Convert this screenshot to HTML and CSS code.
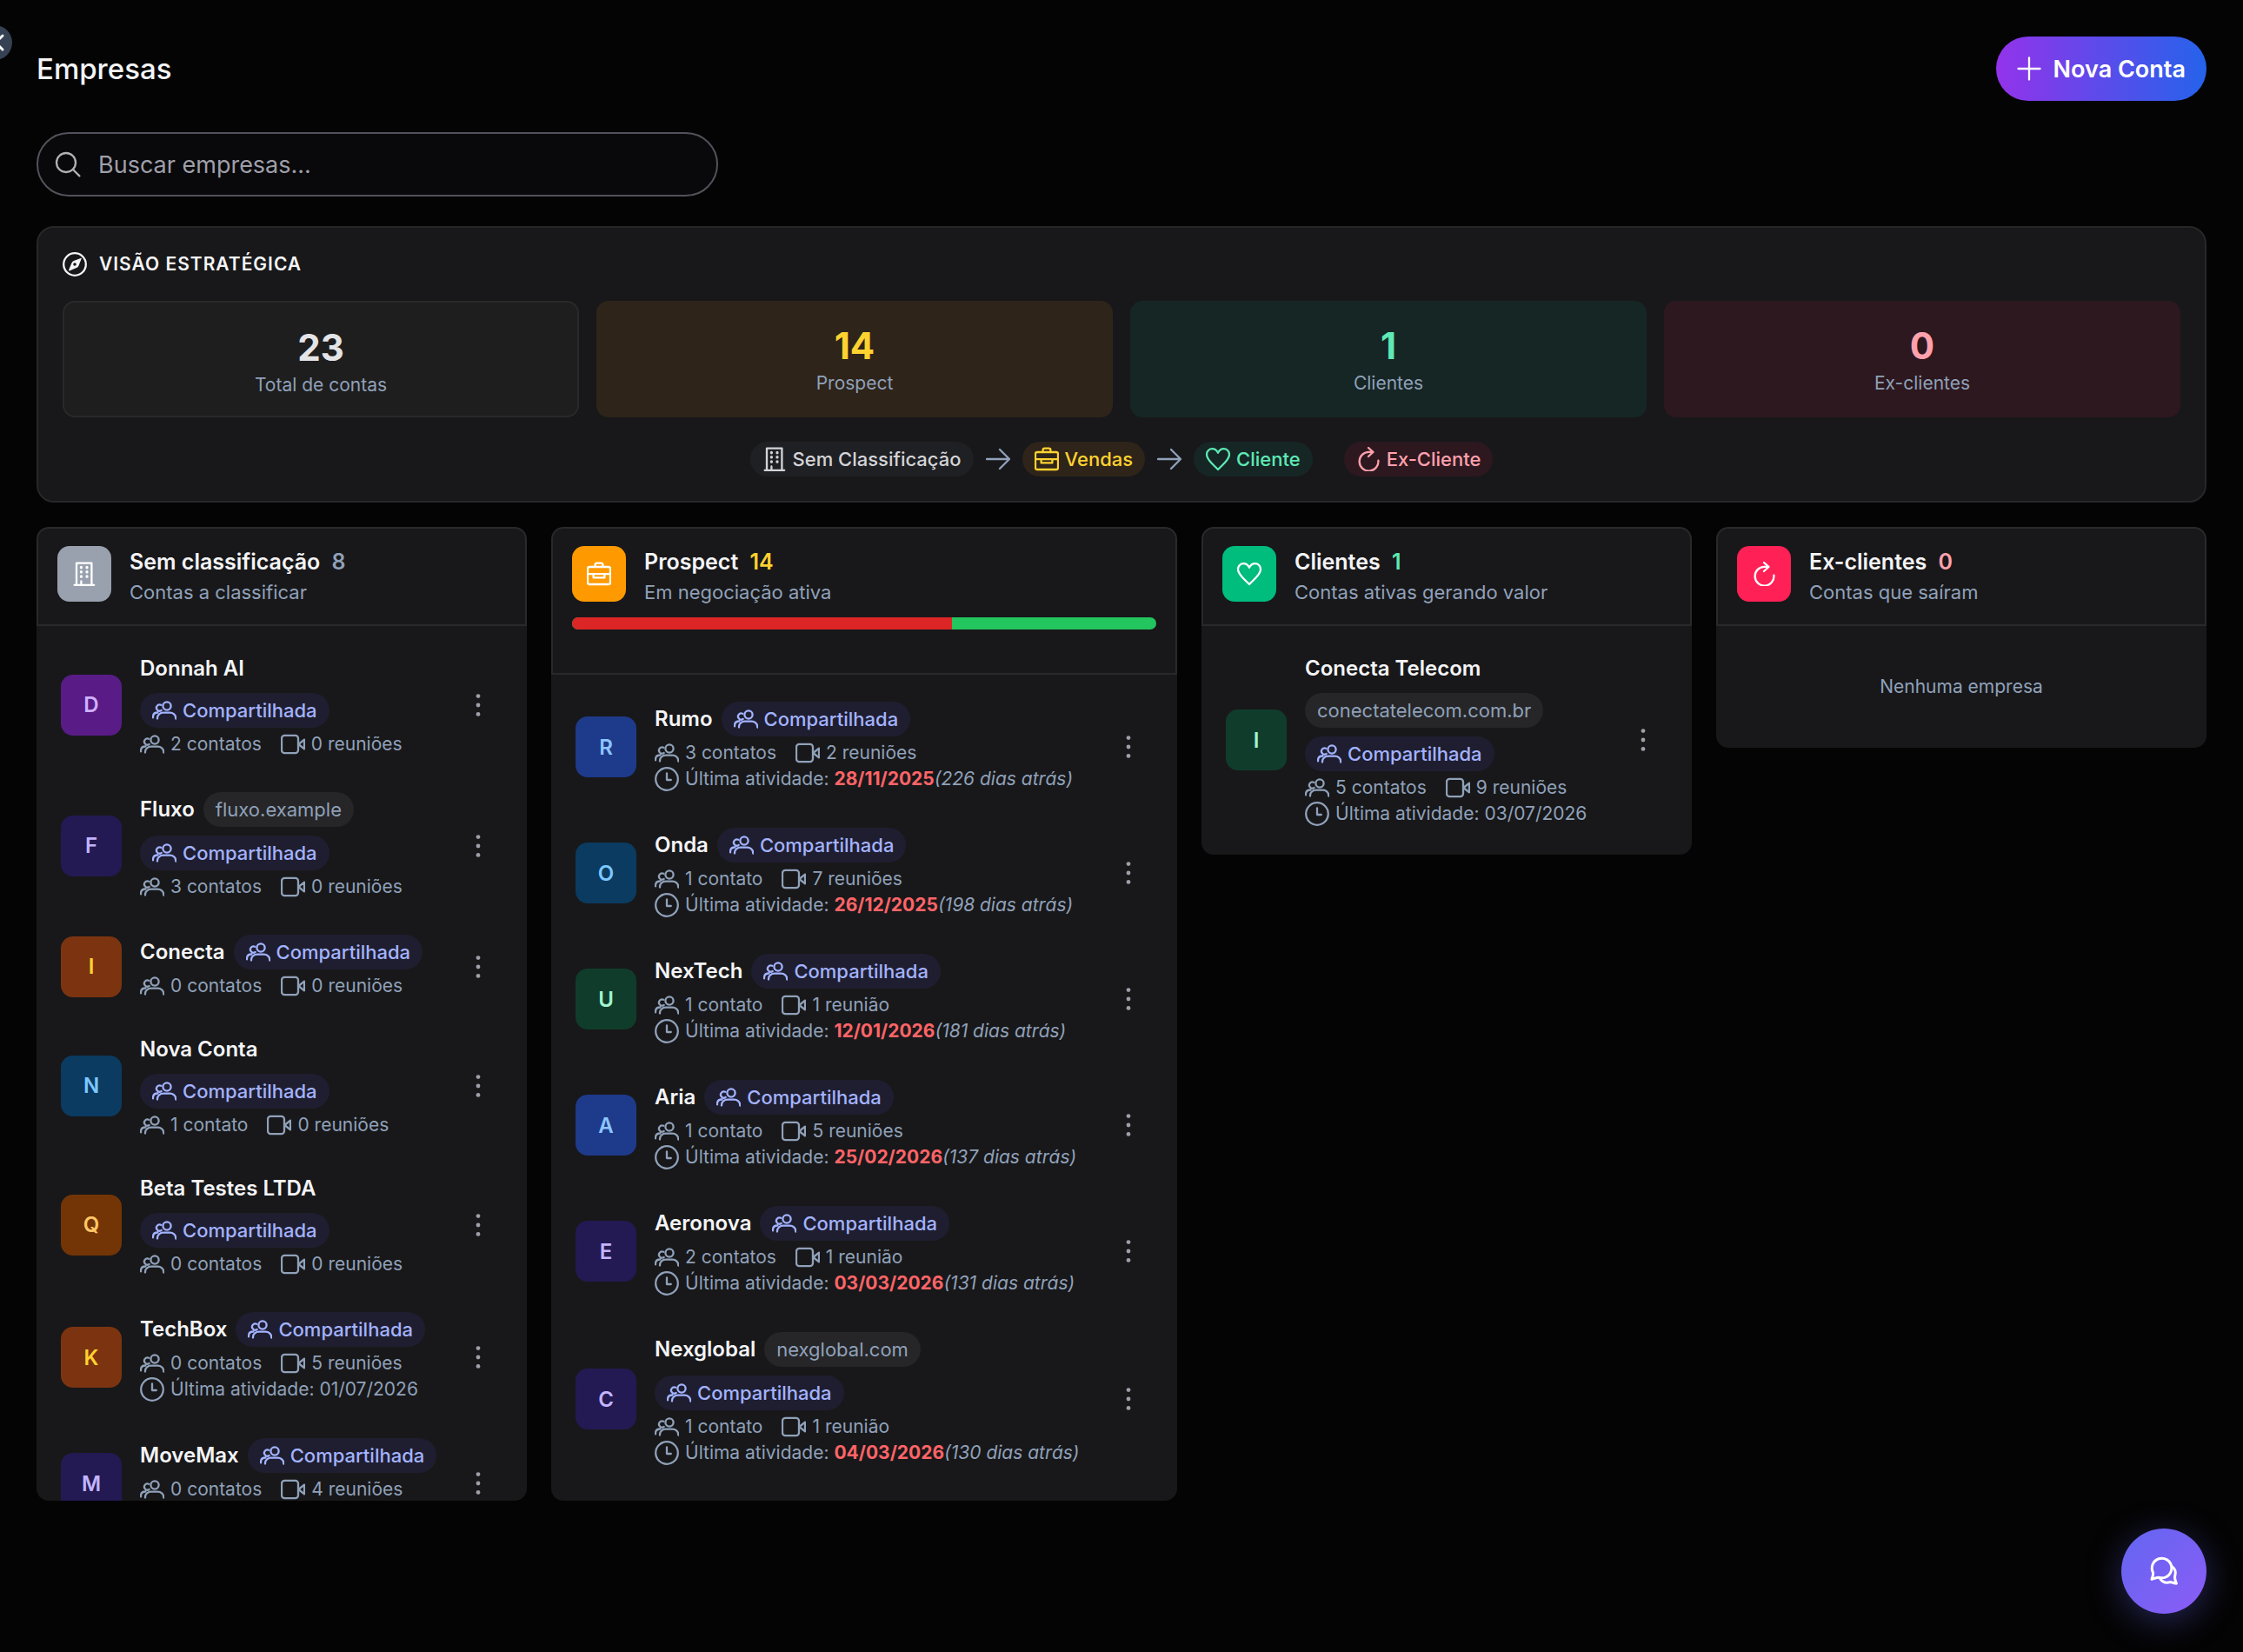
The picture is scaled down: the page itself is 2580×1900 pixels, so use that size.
FILE: index.html
```html
<!DOCTYPE html>
<html lang="pt-BR">

<head>
    <meta charset="UTF-8">
    <meta name="viewport" content="width=device-width, initial-scale=1.0">
    <title>Empresas</title>
    <link rel="stylesheet" href="styles.css">
</head>

<body>

    <!-- Ícones -->
    <svg class="sprite" aria-hidden="true">
        <symbol id="i-people" viewBox="0 0 28 28">
            <circle cx="17" cy="9" r="4.6" />
            <path d="M6 23.6v-.8c0-3.800 3.200-6.200 6.800-6.200h7.600c3.600 0 6.800 2.400 6.800 6.200v.8" />
            <path d="M10.200 7.800a3.600 3.600 0 1 0 .4 6.200M1 22.400v-1c0-3 2.200-4.900 5.400-4.900" />
        </symbol>
        <symbol id="i-video" viewBox="0 0 28 28">
            <rect x="1" y="3.800" width="19" height="20.400" rx="3.400" />
            <path d="M20.400 14l6.600-5.400v10.800z" />
        </symbol>
        <symbol id="i-clock" viewBox="0 0 28 28">
            <circle cx="14" cy="14" r="12.800" />
            <path d="M14 7.400v7.600h4.800" />
        </symbol>
        <symbol id="i-building" viewBox="0 0 28 28">
            <path d="M5 26.600V1.600h17.400v25M2.600 26.800h22.600M10.400 26.600v-4.200" />
            <path d="M10.400 6.400v.4M17 6.400v.4M10.400 11.600v.4M17 11.600v.4M10.400 16.800v.4M17 16.800v.4" stroke-width="3.200" />
        </symbol>
        <symbol id="i-briefcase" viewBox="0 0 28 28">
            <rect x="1" y="6" width="26" height="20" rx="2" />
            <path d="M9.600 6V3.600a2 2 0 0 1 2-2h4.800a2 2 0 0 1 2 2V6M1 14.200h26M7.600 14.400v4h12.800v-4" />
        </symbol>
        <symbol id="i-heart" viewBox="0 0 28 28">
            <path d="M14 26C9 20.600 1 15 1 8.900 1 4.800 4 2.200 7.400 2.200c3 0 5.200 1.800 6.600 4.600 1.400-2.800 3.600-4.600 6.600-4.600C24 2.200 27 4.800 27 8.900 27 15 19 20.600 14 26z" />
        </symbol>
        <symbol id="i-refresh" viewBox="0 0 28 28">
            <path d="M25.400 15.600A10.900 10.900 0 1 1 14.500 5.800h4.600M14 1l5.400 4.900L14 11" />
        </symbol>
        <symbol id="i-arrow" viewBox="0 0 28 28">
            <path d="M1 14h26M16 3l11 11-11 11" />
        </symbol>
        <symbol id="i-dots" viewBox="0 0 28 28">
            <circle cx="14" cy="3.600" r="2.400" />
            <circle cx="14" cy="14" r="2.400" />
            <circle cx="14" cy="24.400" r="2.400" />
        </symbol>
    </svg>

    <button class="sidebar-toggle" aria-label="Abrir menu">
        <svg class="icon" viewBox="0 0 28 28"><path d="M23 6l-8 8 8 8" /></svg>
    </button>

    <main class="page">
        <header class="page-header">
            <h1>Empresas</h1>
            <button class="btn-new">
                <svg class="icon" viewBox="0 0 28 28"><path d="M14 1.500v25M1.500 14h25" /></svg>
                Nova Conta
            </button>
        </header>

        <div class="search">
            <svg class="icon" viewBox="0 0 28 28"><circle cx="12" cy="12" r="11" /><path d="M20 20l7.400 7.400" /></svg>
            <input type="text" aria-label="Buscar empresas" placeholder="Buscar empresas...">
        </div>

        <section class="overview">
            <h2 class="overview-title">
                <svg class="icon" viewBox="0 0 28 28">
                    <circle cx="14" cy="14" r="12.800" />
                    <path class="needle" fill-rule="evenodd" d="M20.800 6.900l-8 3.200a4.400 4.400 0 0 0-2.400 2.400l-3.300 8.100a.6.6 0 0 0 .8.8l8.100-3.300a4.400 4.400 0 0 0 2.400-2.400l3.200-8a.6.6 0 0 0-.8-.8zM14 15.800a1.800 1.800 0 1 1 0-3.600 1.800 1.800 0 0 1 0 3.600z" />
                </svg>
                VISÃO ESTRATÉGICA
            </h2>
            <div class="stats">
                <div class="stat stat-total"><strong>23</strong><span>Total de contas</span></div>
                <div class="stat stat-prospect"><strong>14</strong><span>Prospect</span></div>
                <div class="stat stat-client"><strong>1</strong><span>Clientes</span></div>
                <div class="stat stat-former"><strong>0</strong><span>Ex-clientes</span></div>
            </div>
            <div class="flow">
                <span class="step step-none"><svg class="icon"><use href="#i-building" /></svg>Sem Classificação</span>
                <svg class="icon flow-arrow"><use href="#i-arrow" /></svg>
                <span class="step step-prospect"><svg class="icon"><use href="#i-briefcase" /></svg>Vendas</span>
                <svg class="icon flow-arrow"><use href="#i-arrow" /></svg>
                <span class="step step-client"><svg class="icon"><use href="#i-heart" /></svg>Cliente</span>
                <span class="step step-former"><svg class="icon"><use href="#i-refresh" /></svg>Ex-Cliente</span>
            </div>
        </section>

        <div class="board">

            <!-- Sem classificação -->
            <section class="column column-tall">
                <header class="column-header">
                    <div class="column-heading">
                        <div class="column-icon bg-none"><svg class="icon"><use href="#i-building" /></svg></div>
                        <div>
                            <h3>Sem classificação <span class="count count-none">8</span></h3>
                            <p>Contas a classificar</p>
                        </div>
                    </div>
                </header>
                <div class="column-body">
                    <article class="account">
                        <div class="avatar purple">D</div>
                        <div class="account-info">
                            <div class="account-top">
                                <h4>Donnah AI</h4>
                                <span class="tag shared"><svg class="icon"><use href="#i-people" /></svg>Compartilhada</span>
                            </div>
                            <div class="meta">
                                <span><svg class="icon"><use href="#i-people" /></svg>2 contatos</span>
                                <span><svg class="icon"><use href="#i-video" /></svg>0 reuniões</span>
                            </div>
                        </div>
                        <button class="more" aria-label="Opções"><svg class="icon"><use href="#i-dots" /></svg></button>
                    </article>
                    <article class="account">
                        <div class="avatar indigo">F</div>
                        <div class="account-info">
                            <div class="account-top">
                                <h4>Fluxo</h4>
                                <span class="tag">fluxo.example</span>
                                <span class="tag shared"><svg class="icon"><use href="#i-people" /></svg>Compartilhada</span>
                            </div>
                            <div class="meta">
                                <span><svg class="icon"><use href="#i-people" /></svg>3 contatos</span>
                                <span><svg class="icon"><use href="#i-video" /></svg>0 reuniões</span>
                            </div>
                        </div>
                        <button class="more" aria-label="Opções"><svg class="icon"><use href="#i-dots" /></svg></button>
                    </article>
                    <article class="account">
                        <div class="avatar orange">I</div>
                        <div class="account-info">
                            <div class="account-top">
                                <h4>Conecta</h4>
                                <span class="tag shared"><svg class="icon"><use href="#i-people" /></svg>Compartilhada</span>
                            </div>
                            <div class="meta">
                                <span><svg class="icon"><use href="#i-people" /></svg>0 contatos</span>
                                <span><svg class="icon"><use href="#i-video" /></svg>0 reuniões</span>
                            </div>
                        </div>
                        <button class="more" aria-label="Opções"><svg class="icon"><use href="#i-dots" /></svg></button>
                    </article>
                    <article class="account">
                        <div class="avatar sky">N</div>
                        <div class="account-info">
                            <div class="account-top">
                                <h4 class="name-line">Nova Conta</h4>
                                <span class="tag shared"><svg class="icon"><use href="#i-people" /></svg>Compartilhada</span>
                            </div>
                            <div class="meta">
                                <span><svg class="icon"><use href="#i-people" /></svg>1 contato</span>
                                <span><svg class="icon"><use href="#i-video" /></svg>0 reuniões</span>
                            </div>
                        </div>
                        <button class="more" aria-label="Opções"><svg class="icon"><use href="#i-dots" /></svg></button>
                    </article>
                    <article class="account">
                        <div class="avatar amber">Q</div>
                        <div class="account-info">
                            <div class="account-top">
                                <h4>Beta Testes LTDA</h4>
                                <span class="tag shared"><svg class="icon"><use href="#i-people" /></svg>Compartilhada</span>
                            </div>
                            <div class="meta">
                                <span><svg class="icon"><use href="#i-people" /></svg>0 contatos</span>
                                <span><svg class="icon"><use href="#i-video" /></svg>0 reuniões</span>
                            </div>
                        </div>
                        <button class="more" aria-label="Opções"><svg class="icon"><use href="#i-dots" /></svg></button>
                    </article>
                    <article class="account">
                        <div class="avatar orange">K</div>
                        <div class="account-info">
                            <div class="account-top">
                                <h4>TechBox</h4>
                                <span class="tag shared"><svg class="icon"><use href="#i-people" /></svg>Compartilhada</span>
                            </div>
                            <div class="meta">
                                <span><svg class="icon"><use href="#i-people" /></svg>0 contatos</span>
                                <span><svg class="icon"><use href="#i-video" /></svg>5 reuniões</span>
                            </div>
                            <div class="activity"><svg class="icon"><use href="#i-clock" /></svg><span>Última atividade: 01/07/2026</span></div>
                        </div>
                        <button class="more" aria-label="Opções"><svg class="icon"><use href="#i-dots" /></svg></button>
                    </article>
                    <article class="account">
                        <div class="avatar indigo">M</div>
                        <div class="account-info">
                            <div class="account-top">
                                <h4>MoveMax</h4>
                                <span class="tag shared"><svg class="icon"><use href="#i-people" /></svg>Compartilhada</span>
                            </div>
                            <div class="meta">
                                <span><svg class="icon"><use href="#i-people" /></svg>0 contatos</span>
                                <span><svg class="icon"><use href="#i-video" /></svg>4 reuniões</span>
                            </div>
                            <div class="activity"><svg class="icon"><use href="#i-clock" /></svg></div>
                        </div>
                        <button class="more" aria-label="Opções"><svg class="icon"><use href="#i-dots" /></svg></button>
                    </article>
                </div>
            </section>

            <!-- Prospect -->
            <section class="column column-tall">
                <header class="column-header">
                    <div class="column-heading">
                        <div class="column-icon bg-prospect"><svg class="icon"><use href="#i-briefcase" /></svg></div>
                        <div>
                            <h3>Prospect <span class="count count-prospect">14</span></h3>
                            <p>Em negociação ativa</p>
                        </div>
                    </div>
                    <div class="health"><div class="health-late" style="width: 65%"></div></div>
                </header>
                <div class="column-body">
                    <article class="account">
                        <div class="avatar blue">R</div>
                        <div class="account-info">
                            <div class="account-top">
                                <h4>Rumo</h4>
                                <span class="tag shared"><svg class="icon"><use href="#i-people" /></svg>Compartilhada</span>
                            </div>
                            <div class="meta">
                                <span><svg class="icon"><use href="#i-people" /></svg>3 contatos</span>
                                <span><svg class="icon"><use href="#i-video" /></svg>2 reuniões</span>
                            </div>
                            <div class="activity"><svg class="icon"><use href="#i-clock" /></svg><span>Última atividade: <b>28/11/2025</b><em>(226 dias atrás)</em></span></div>
                        </div>
                        <button class="more" aria-label="Opções"><svg class="icon"><use href="#i-dots" /></svg></button>
                    </article>
                    <article class="account">
                        <div class="avatar sky">O</div>
                        <div class="account-info">
                            <div class="account-top">
                                <h4>Onda</h4>
                                <span class="tag shared"><svg class="icon"><use href="#i-people" /></svg>Compartilhada</span>
                            </div>
                            <div class="meta">
                                <span><svg class="icon"><use href="#i-people" /></svg>1 contato</span>
                                <span><svg class="icon"><use href="#i-video" /></svg>7 reuniões</span>
                            </div>
                            <div class="activity"><svg class="icon"><use href="#i-clock" /></svg><span>Última atividade: <b>26/12/2025</b><em>(198 dias atrás)</em></span></div>
                        </div>
                        <button class="more" aria-label="Opções"><svg class="icon"><use href="#i-dots" /></svg></button>
                    </article>
                    <article class="account">
                        <div class="avatar green">U</div>
                        <div class="account-info">
                            <div class="account-top">
                                <h4>NexTech</h4>
                                <span class="tag shared"><svg class="icon"><use href="#i-people" /></svg>Compartilhada</span>
                            </div>
                            <div class="meta">
                                <span><svg class="icon"><use href="#i-people" /></svg>1 contato</span>
                                <span><svg class="icon"><use href="#i-video" /></svg>1 reunião</span>
                            </div>
                            <div class="activity"><svg class="icon"><use href="#i-clock" /></svg><span>Última atividade: <b>12/01/2026</b><em>(181 dias atrás)</em></span></div>
                        </div>
                        <button class="more" aria-label="Opções"><svg class="icon"><use href="#i-dots" /></svg></button>
                    </article>
                    <article class="account">
                        <div class="avatar blue">A</div>
                        <div class="account-info">
                            <div class="account-top">
                                <h4>Aria</h4>
                                <span class="tag shared"><svg class="icon"><use href="#i-people" /></svg>Compartilhada</span>
                            </div>
                            <div class="meta">
                                <span><svg class="icon"><use href="#i-people" /></svg>1 contato</span>
                                <span><svg class="icon"><use href="#i-video" /></svg>5 reuniões</span>
                            </div>
                            <div class="activity"><svg class="icon"><use href="#i-clock" /></svg><span>Última atividade: <b>25/02/2026</b><em>(137 dias atrás)</em></span></div>
                        </div>
                        <button class="more" aria-label="Opções"><svg class="icon"><use href="#i-dots" /></svg></button>
                    </article>
                    <article class="account">
                        <div class="avatar indigo">E</div>
                        <div class="account-info">
                            <div class="account-top">
                                <h4>Aeronova</h4>
                                <span class="tag shared"><svg class="icon"><use href="#i-people" /></svg>Compartilhada</span>
                            </div>
                            <div class="meta">
                                <span><svg class="icon"><use href="#i-people" /></svg>2 contatos</span>
                                <span><svg class="icon"><use href="#i-video" /></svg>1 reunião</span>
                            </div>
                            <div class="activity"><svg class="icon"><use href="#i-clock" /></svg><span>Última atividade: <b>03/03/2026</b><em>(131 dias atrás)</em></span></div>
                        </div>
                        <button class="more" aria-label="Opções"><svg class="icon"><use href="#i-dots" /></svg></button>
                    </article>
                    <article class="account">
                        <div class="avatar indigo">C</div>
                        <div class="account-info">
                            <div class="account-top">
                                <h4>Nexglobal</h4>
                                <span class="tag">nexglobal.com</span>
                                <span class="tag shared"><svg class="icon"><use href="#i-people" /></svg>Compartilhada</span>
                            </div>
                            <div class="meta">
                                <span><svg class="icon"><use href="#i-people" /></svg>1 contato</span>
                                <span><svg class="icon"><use href="#i-video" /></svg>1 reunião</span>
                            </div>
                            <div class="activity"><svg class="icon"><use href="#i-clock" /></svg><span>Última atividade: <b>04/03/2026</b><em>(130 dias atrás)</em></span></div>
                        </div>
                        <button class="more" aria-label="Opções"><svg class="icon"><use href="#i-dots" /></svg></button>
                    </article>
                </div>
            </section>

            <!-- Clientes -->
            <section class="column">
                <header class="column-header">
                    <div class="column-heading">
                        <div class="column-icon bg-client"><svg class="icon"><use href="#i-heart" /></svg></div>
                        <div>
                            <h3>Clientes <span class="count count-client">1</span></h3>
                            <p>Contas ativas gerando valor</p>
                        </div>
                    </div>
                </header>
                <div class="column-body">
                    <article class="account">
                        <div class="avatar green">I</div>
                        <div class="account-info">
                            <div class="account-top">
                                <h4>Conecta Telecom</h4>
                                <span class="tag">conectatelecom.com.br</span>
                                <span class="tag shared"><svg class="icon"><use href="#i-people" /></svg>Compartilhada</span>
                            </div>
                            <div class="meta">
                                <span><svg class="icon"><use href="#i-people" /></svg>5 contatos</span>
                                <span><svg class="icon"><use href="#i-video" /></svg>9 reuniões</span>
                            </div>
                            <div class="activity"><svg class="icon"><use href="#i-clock" /></svg><span>Última atividade: 03/07/2026</span></div>
                        </div>
                        <button class="more" aria-label="Opções"><svg class="icon"><use href="#i-dots" /></svg></button>
                    </article>
                </div>
            </section>

            <!-- Ex-clientes -->
            <section class="column">
                <header class="column-header">
                    <div class="column-heading">
                        <div class="column-icon bg-former"><svg class="icon"><use href="#i-refresh" /></svg></div>
                        <div>
                            <h3>Ex-clientes <span class="count count-former">0</span></h3>
                            <p>Contas que saíram</p>
                        </div>
                    </div>
                </header>
                <p class="empty">Nenhuma empresa</p>
            </section>

        </div>
    </main>

    <button class="chat" aria-label="Abrir chat">
        <svg class="icon" viewBox="0 0 32 32">
            <path d="M2 25.400c1.200-3 1.800-5 1.600-7.600A11.300 11.300 0 1 1 13.400 23.800c-1.700 0-2.500-.6-4-.5-2.400.2-4.800 1.300-7.400 2.100z" />
            <path d="M25.400 10.600c3.400 2.600 4.600 6.600 3.400 10.600-.6 2.200.4 6.200 1.600 9-2.800-.2-5.400-1.600-7.400-1.600-3.800 1.200-8.400.2-11.400-4" />
        </svg>
    </button>

</body>

</html>
```

FILE: styles.css
```css
* {
    box-sizing: border-box;
    margin: 0;
}

body {
    font-family: Inter, 'Liberation Sans', sans-serif;
    background: #040404;
    color: #f4f4f6;
    min-height: 100vh;
    overflow: hidden;
}

button {
    font-family: inherit;
    border: none;
    cursor: pointer;
}

.sprite {
    display: none;
}

.icon {
    width: 28px;
    height: 28px;
    flex: none;
    fill: none;
    stroke: currentColor;
    stroke-width: 2.3;
    stroke-linecap: round;
    stroke-linejoin: round;
    overflow: visible;
}

.sidebar-toggle {
    position: fixed;
    top: 29px;
    left: -26px;
    width: 40px;
    height: 40px;
    padding: 6px;
    border-radius: 50%;
    background: #364153;
    color: #fff;
}

.sidebar-toggle .icon {
    stroke-width: 3;
}

.page {
    padding: 42px;
}

.page-header {
    display: flex;
    justify-content: space-between;
    align-items: center;
}

h1 {
    font-size: 33px;
    font-weight: 500;
}

.btn-new {
    display: flex;
    align-items: center;
    gap: 14px;
    height: 74px;
    padding: 0 24px;
    border-radius: 37px;
    background: linear-gradient(90deg, #9333ea, #2563eb);
    color: #fff;
    font-size: 27px;
    font-weight: 600;
}

/* Busca */
.search {
    display: flex;
    align-items: center;
    gap: 21px;
    width: 784px;
    max-width: 100%;
    height: 74px;
    margin-top: 36px;
    padding: 0 20px;
    border: 2px solid #52525b;
    border-radius: 37px;
    background: #09090b;
    color: #b0b0b6;
}

.search input {
    flex: 1;
    padding: 0;
    border: none;
    outline: none;
    background: none;
    color: #f4f4f6;
    font-family: inherit;
    font-size: 27px;
}

.search input::placeholder {
    color: #9f9fa9;
}

/* Visão estratégica */
.overview {
    margin-top: 34px;
    padding: 28px;
    border: 2px solid #27272a;
    border-radius: 20px;
    background: #18181a;
}

.overview-title {
    display: flex;
    align-items: center;
    gap: 14px;
    font-size: 21px;
    font-weight: 600;
    line-height: 28px;
    letter-spacing: 1px;
}

.needle {
    fill: currentColor;
    stroke: none;
}

.stats {
    display: grid;
    grid-template-columns: repeat(4, 1fr);
    gap: 20px;
    margin-top: 28px;
}

.stat {
    display: flex;
    flex-direction: column;
    align-items: center;
    height: 134px;
    padding: 26px;
    border-radius: 14px;
}

.stat strong {
    font-size: 42px;
    font-weight: 700;
    line-height: 52px;
}

.stat span {
    margin-top: 3px;
    color: #90a1b9;
    font-size: 21px;
    line-height: 28px;
}

.stat-total {
    border: 2px solid #29292a;
    background: #1e1e1e;
    color: #e4e4e7;
}

.stat-prospect {
    background: #2e241a;
    color: #ffd230;
}

.stat-client {
    background: #162625;
    color: #5ee9b5;
}

.stat-former {
    background: #2d181f;
    color: #ffa1ad;
}

.flow {
    display: flex;
    justify-content: center;
    align-items: center;
    gap: 14px;
    margin-top: 28px;
}

.flow-arrow {
    color: #90a1b9;
}

.step {
    display: flex;
    align-items: center;
    gap: 7px;
    height: 40px;
    padding: 0 14px;
    border-radius: 20px;
    font-size: 22px;
    font-weight: 500;
}

.step-none {
    background: #1f2023;
    color: #d4d4d8;
}

.step-prospect {
    background: #2e241a;
    color: #ffd230;
}

.step-client {
    background: #162625;
    color: #5ee9b5;
}

.step-former {
    margin-left: 22px;
    background: #2d181f;
    color: #ffa1ad;
}

/* Colunas */
.board {
    display: grid;
    grid-template-columns: 47fr 60fr 47fr 47fr;
    align-items: start;
    gap: 28px;
    margin-top: 28px;
}

.column {
    display: flex;
    flex-direction: column;
    min-width: 0;
    border-radius: 14px;
    background: #18181a;
    overflow: hidden;
}

.column-tall {
    height: calc(100vh - 780px);
}

.column-header {
    flex: none;
    padding: 20px 22px;
    border: 2px solid #29292b;
    border-radius: 14px 14px 0 0;
}

.column-heading {
    display: flex;
    gap: 21px;
}

.column-icon {
    display: flex;
    justify-content: center;
    align-items: center;
    width: 62px;
    height: 64px;
    border-radius: 14px;
    color: #fff;
}

.bg-none {
    background: #99a1af;
}

.bg-prospect {
    background: #fe9a00;
}

.bg-client {
    background: #00bc7d;
}

.bg-former {
    background: #ff2056;
}

.column-heading h3 {
    font-size: 25px;
    font-weight: 600;
    line-height: 36px;
}

.column-heading p {
    color: #90a1b9;
    font-size: 22px;
    line-height: 34px;
}

.count {
    margin-left: 7px;
}

.count-none {
    color: #90a1b9;
}

.count-prospect {
    color: #ffd230;
}

.count-client {
    color: #5ee9b5;
}

.count-former {
    color: #ffa1ad;
}

.health {
    height: 14px;
    margin: 12px 0 30px;
    border-radius: 7px;
    background: #22c55e;
    overflow: hidden;
}

.health-late {
    height: 100%;
    background: #dc2626;
}

.column-body {
    display: flex;
    flex-direction: column;
    gap: 1px;
    min-height: 0;
    padding: 11px 10px 12px;
    overflow-y: auto;
    scrollbar-width: none;
}

.account {
    display: flex;
    flex: none;
    align-items: center;
    padding: 20px 18px;
}

.avatar {
    display: flex;
    flex: none;
    justify-content: center;
    align-items: center;
    width: 70px;
    height: 70px;
    margin-right: 21px;
    border-radius: 14px;
    font-size: 24px;
    font-weight: 600;
}

.purple {
    background: #591c87;
    color: #d0b0ff;
}

.indigo {
    background: #231a53;
    color: #c4b4ff;
}

.orange {
    background: #7c3410;
    color: #ffd230;
}

.amber {
    background: #733506;
    color: #ffc766;
}

.sky {
    background: #0b3b61;
    color: #7cc8ff;
}

.blue {
    background: #1e3a8a;
    color: #8ec5ff;
}

.green {
    background: #103d2b;
    color: #a4f4cf;
}

.account-info {
    flex: 1;
    min-width: 0;
    margin-right: 16px;
}

.account-top {
    display: flex;
    flex-wrap: wrap;
    align-items: center;
    gap: 10px;
    margin-bottom: 4px;
}

h4 {
    font-size: 24px;
    font-weight: 600;
    line-height: 36px;
}

.tag {
    display: flex;
    align-items: center;
    gap: 7px;
    height: 40px;
    padding: 0 14px;
    border-radius: 20px;
    background: #262628;
    color: #90a1b9;
    font-size: 22px;
}

.shared {
    background: #1f1e30;
    color: #a3b3ff;
    font-weight: 500;
}

.meta {
    display: flex;
    gap: 22px;
    height: 29px;
}

.meta span,
.activity {
    display: flex;
    align-items: center;
    gap: 7px;
    color: #90a1b9;
    font-size: 21px;
    white-space: nowrap;
}

.activity {
    height: 31px;
}

.activity b {
    color: #ff6467;
    font-weight: 700;
}

.more {
    display: flex;
    flex: none;
    justify-content: center;
    align-items: center;
    width: 56px;
    height: 56px;
    padding: 0;
    background: none;
    color: #9f9fa9;
}

.more .icon {
    fill: currentColor;
    stroke: none;
}

.empty {
    padding: 56px 20px;
    color: #90a1b9;
    font-size: 21px;
    line-height: 28px;
    text-align: center;
}

.chat {
    position: fixed;
    right: 42px;
    bottom: 44px;
    display: flex;
    justify-content: center;
    align-items: center;
    width: 98px;
    height: 98px;
    border-radius: 50%;
    background: linear-gradient(135deg, #6366f1, #8b5cf6);
    box-shadow: 0 8px 40px rgba(99, 102, 241, 0.35);
    color: #fff;
}

.chat .icon {
    width: 32px;
    height: 32px;
    stroke-width: 3;
}
```
